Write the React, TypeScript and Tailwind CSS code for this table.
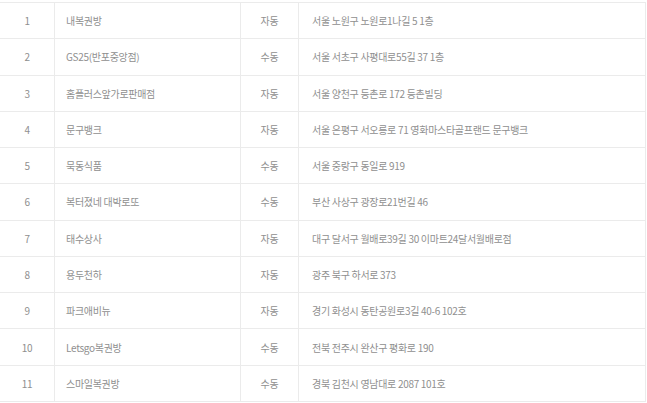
const rows = [
  { no: 1, name: "내복권방", type: "자동", addr: "서울 노원구 노원로1나길 5 1층" },
  { no: 2, name: "GS25(반포중앙점)", type: "수동", addr: "서울 서초구 사평대로55길 37 1층" },
  { no: 3, name: "홈플러스앞가로판매점", type: "자동", addr: "서울 양천구 등촌로 172 등촌빌딩" },
  { no: 4, name: "문구뱅크", type: "자동", addr: "서울 은평구 서오릉로 71 영화마스타골프랜드 문구뱅크" },
  { no: 5, name: "묵동식품", type: "수동", addr: "서울 중랑구 동일로 919" },
  { no: 6, name: "복터졌네 대박로또", type: "수동", addr: "부산 사상구 광장로21번길 46" },
  { no: 7, name: "태수상사", type: "자동", addr: "대구 달서구 월배로39길 30 이마트24달서월배로점" },
  { no: 8, name: "용두천하", type: "자동", addr: "광주 북구 하서로 373" },
  { no: 9, name: "파크애비뉴", type: "자동", addr: "경기 화성시 동탄공원로3길 40-6 102호" },
  { no: 10, name: "Letsgo복권방", type: "수동", addr: "전북 전주시 완산구 평화로 190" },
  { no: 11, name: "스마일복권방", type: "수동", addr: "경북 김천시 영남대로 2087 101호" },
];

export default function App() {
  return (
    <div className="w-[647px] h-[403px] bg-white pt-[2px] overflow-hidden font-['Noto_Sans_CJK_KR','Noto_Sans',sans-serif] text-[10px] tracking-[-0.3px] text-[#8f8f8f]">
      <div className="w-[646px] border-t border-[#ebebeb]">
        {rows.map((r) => (
          <div
            key={r.no}
            className="grid grid-cols-[55px_186px_58px_347px] h-[36.27px] border-b border-[#ebebeb]"
          >
            <div className="flex items-center justify-center border-r border-[#ebebeb]">{r.no}</div>
            <div className="flex items-center pl-[11px] border-r border-[#ebebeb]">{r.name}</div>
            <div className="flex items-center justify-center border-r border-[#ebebeb]">{r.type}</div>
            <div className="flex items-center pl-[13px] border-r border-[#ebebeb]">{r.addr}</div>
          </div>
        ))}
      </div>
    </div>
  );
}
